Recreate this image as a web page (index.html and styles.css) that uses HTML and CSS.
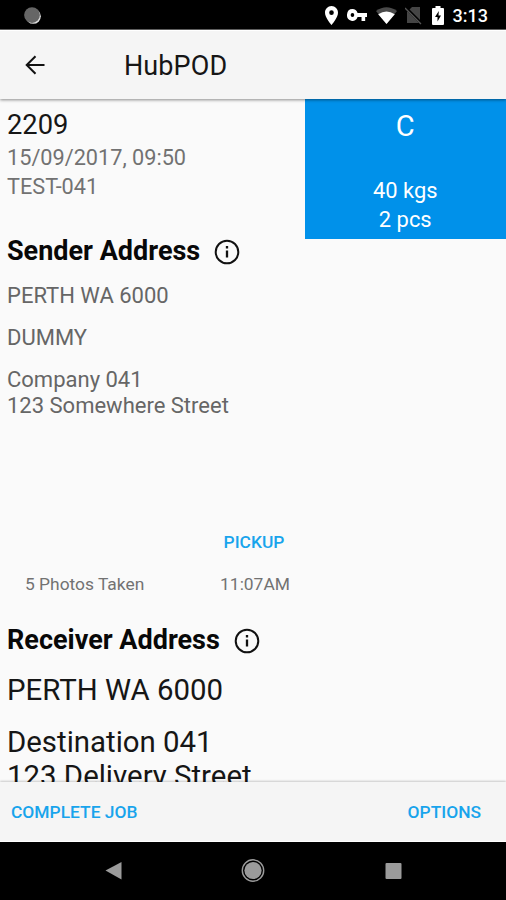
FILE: index.html
```html
<!DOCTYPE html>
<html lang="en">
<head>
<meta charset="utf-8">
<title>HubPOD</title>
<link rel="stylesheet" href="styles.css">
</head>
<body>
<div class="screen">
  <div class="status">
    <svg class="sync" viewBox="0 0 20 20"><circle cx="10.800" cy="10.800" r="8" fill="#ddd"/><circle cx="9.500" cy="9.500" r="8.300" fill="#666"/></svg>
    <div class="status-right">
      <svg width="13" height="19" viewBox="5 2 14 20" preserveAspectRatio="none"><path fill="#fff" fill-rule="evenodd" d="M12 2C8.1 2 5 5.1 5 9c0 5.200 7 13 7 13s7-7.800 7-13c0-3.900-3.100-7-7-7zm0 9.500a2.500 2.500 0 1 1 0-5 2.500 2.500 0 0 1 0 5z"/></svg>
      <svg class="key" width="20" height="12" viewBox="1 6 22 12" preserveAspectRatio="none"><path fill="#fff" fill-rule="evenodd" d="M12.650 10C11.800 7.600 9.600 6 7 6a6 6 0 1 0 5.650 8H17v4h4v-4h2v-4H12.650zM7 14a2 2 0 1 1 0-4 2 2 0 0 1 0 4z"/></svg>
      <svg class="wifi" width="21" height="17" viewBox="0 0 21 17"><path fill="#4a4a4a" d="M0 4Q10.500-3.500 21 4L10.500 17z"/><path fill="#fff" d="M2.200 7.200Q10.500 1.800 18.800 7.200L10.500 17z"/></svg>
      <svg class="sim" width="18" height="19" viewBox="0 0 18 19"><path fill="#454545" d="M7 1h8v16H2V6z"/><path d="M0 1l17 17" stroke="#000" stroke-width="3"/><path d="M0 2l16 16" stroke="#555" stroke-width="1.300"/></svg>
      <svg class="battery" width="12" height="19" viewBox="0 0 12 19"><path fill="#fff" d="M3.500 0h5v2H11q1 0 1 1v15q0 1-1 1H1q-1 0-1-1V3q0-1 1-1h2.500z"/><path fill="#000" d="M6.800 5L3 11h2.500v4.500L9 9.500H6.500z"/></svg>
      <span class="clock">3:13</span>
    </div>
  </div>
  <header class="appbar">
    <svg class="back" width="20" height="20" viewBox="0 0 20 20"><path d="M19.500 10H2M10.500 1.200L1.700 10l8.800 8.800" fill="none" stroke="#111" stroke-width="2"/></svg>
    <h1>HubPOD</h1>
  </header>
  <main>
    <section class="top">
      <div class="job">
        <div class="number">2209</div>
        <div class="meta">15/09/2017, 09:50</div>
        <div class="meta">TEST-041</div>
      </div>
      <aside class="load">
        <div class="grade">C</div>
        <div>40 kgs</div>
        <div>2 pcs</div>
      </aside>
    </section>
    <section class="address sender">
      <h2><span>Sender Address</span><svg class="info" viewBox="0 0 26 26"><circle cx="13" cy="13" r="11.300" fill="none" stroke="#111" stroke-width="2"/><path d="M13 7v2.500M13 11.500v7" stroke="#111" stroke-width="2.300"/></svg></h2>
      <p>PERTH WA 6000</p>
      <p>DUMMY</p>
      <p>Company 041<br>123 Somewhere Street</p>
    </section>
    <section class="events">
      <span class="pickup">PICKUP</span>
      <span class="photos">5 Photos Taken</span>
      <span class="time">11:07AM</span>
    </section>
    <section class="address receiver">
      <h2><span>Receiver Address</span><svg class="info" viewBox="0 0 26 26"><circle cx="13" cy="13" r="11.300" fill="none" stroke="#111" stroke-width="2"/><path d="M13 7v2.500M13 11.500v7" stroke="#111" stroke-width="2.300"/></svg></h2>
      <p>PERTH WA 6000</p>
      <p>Destination 041<br>123 Delivery Street</p>
    </section>
  </main>
  <footer class="actions"><span>COMPLETE JOB</span><span>OPTIONS</span></footer>
  <nav class="system">
    <svg width="506" height="58" viewBox="0 0 506 58"><g fill="#9b9b9b"><path d="M105.500 28.500L121.500 20v17.500z"/><circle cx="253" cy="28.500" r="8.600"/><circle cx="253" cy="28.500" r="10.700" fill="none" stroke="#9b9b9b" stroke-width="1.400"/><rect x="385.500" y="21" width="16" height="16" rx="1"/></g></svg>
  </nav>
</div>
</body>
</html>
```
FILE: styles.css
```css
* { box-sizing: border-box; }
body { margin: 0; font-family: Roboto, "Liberation Sans", sans-serif; color: #161616; }
h1, h2, p { margin: 0; }
svg { display: block; flex: none; }
.screen { width: 506px; height: 900px; display: flex; flex-direction: column; background: #fafafa; overflow: hidden; white-space: nowrap; }
.status { height: 30px; flex: none; background: #000; border-bottom: 1px solid #666; display: flex; justify-content: space-between; padding: 0 18px 0 23px; }
.sync { width: 19px; height: 19px; margin-top: 6px; }
.status-right { display: flex; padding-top: 6px; }
.key { margin: 3px 0 0 9px; }
.wifi { margin: 1px 0 0 9px; }
.sim { margin-left: 8px; }
.battery { margin-left: 9px; }
.clock { margin-left: 9px; font-size: 18px; font-weight: 500; line-height: 20px; color: #fff; }
.appbar { height: 69px; flex: none; background: #f5f5f5; border-top: 1px solid #fff; display: flex; align-items: center; padding-left: 25px; position: relative; box-shadow: 0 1px 3px rgba(0, 0, 0, .45); }
h1 { font-size: 27px; font-weight: 400; line-height: 36px; margin: 2px 0 0 79px; letter-spacing: .1px; }
main { height: 683px; flex: none; overflow: hidden; }
.top { height: 140px; display: flex; justify-content: space-between; }
.job { padding: 8px 0 0 7px; }
.number { font-size: 27.300px; line-height: 36px; }
.meta { font-size: 21.700px; line-height: 29px; color: #727272; }
.load { width: 201.500px; background: #0091ea; color: #fff; text-align: center; font-size: 21.900px; line-height: 29px; }
.grade { font-size: 29px; line-height: 36px; margin: 9px 0 32px; }
.address { padding-left: 7px; }
.sender { height: 294px; margin-top: -5px; }
h2 { display: flex; align-items: center; font-size: 27px; font-weight: 700; line-height: 34px; color: #080808; margin-bottom: 15px; }
.info { width: 26px; height: 26px; margin: 1px 0 0 14px; }
.sender p { font-size: 22px; line-height: 25.500px; color: #666; margin-bottom: 16.500px; }
.events { height: 95px; padding-top: 4px; display: grid; grid-template-columns: 183px 144px; grid-template-rows: 20px 20px; row-gap: 22px; font-size: 17.400px; line-height: 20px; color: #727272; }
.pickup { grid-column: 2; padding-right: 2px; text-align: center; color: #18a4ec; font-weight: 500; }
.photos { padding-left: 25px; }
.time { text-align: center; }
.receiver p { font-size: 29.400px; line-height: 34px; margin-bottom: 18px; }
.receiver h2 { margin-bottom: 16px; }
.actions { height: 60px; flex: none; background: #f5f5f5; display: flex; justify-content: space-between; align-items: center; padding: 1px 25px 0 11px; font-size: 17.400px; font-weight: 500; color: #18a4ec; position: relative; box-shadow: 0 -1px 2px rgba(0, 0, 0, .2); border-bottom: 1px solid #fff; }
.system { height: 58px; flex: none; background: #000; }
```
